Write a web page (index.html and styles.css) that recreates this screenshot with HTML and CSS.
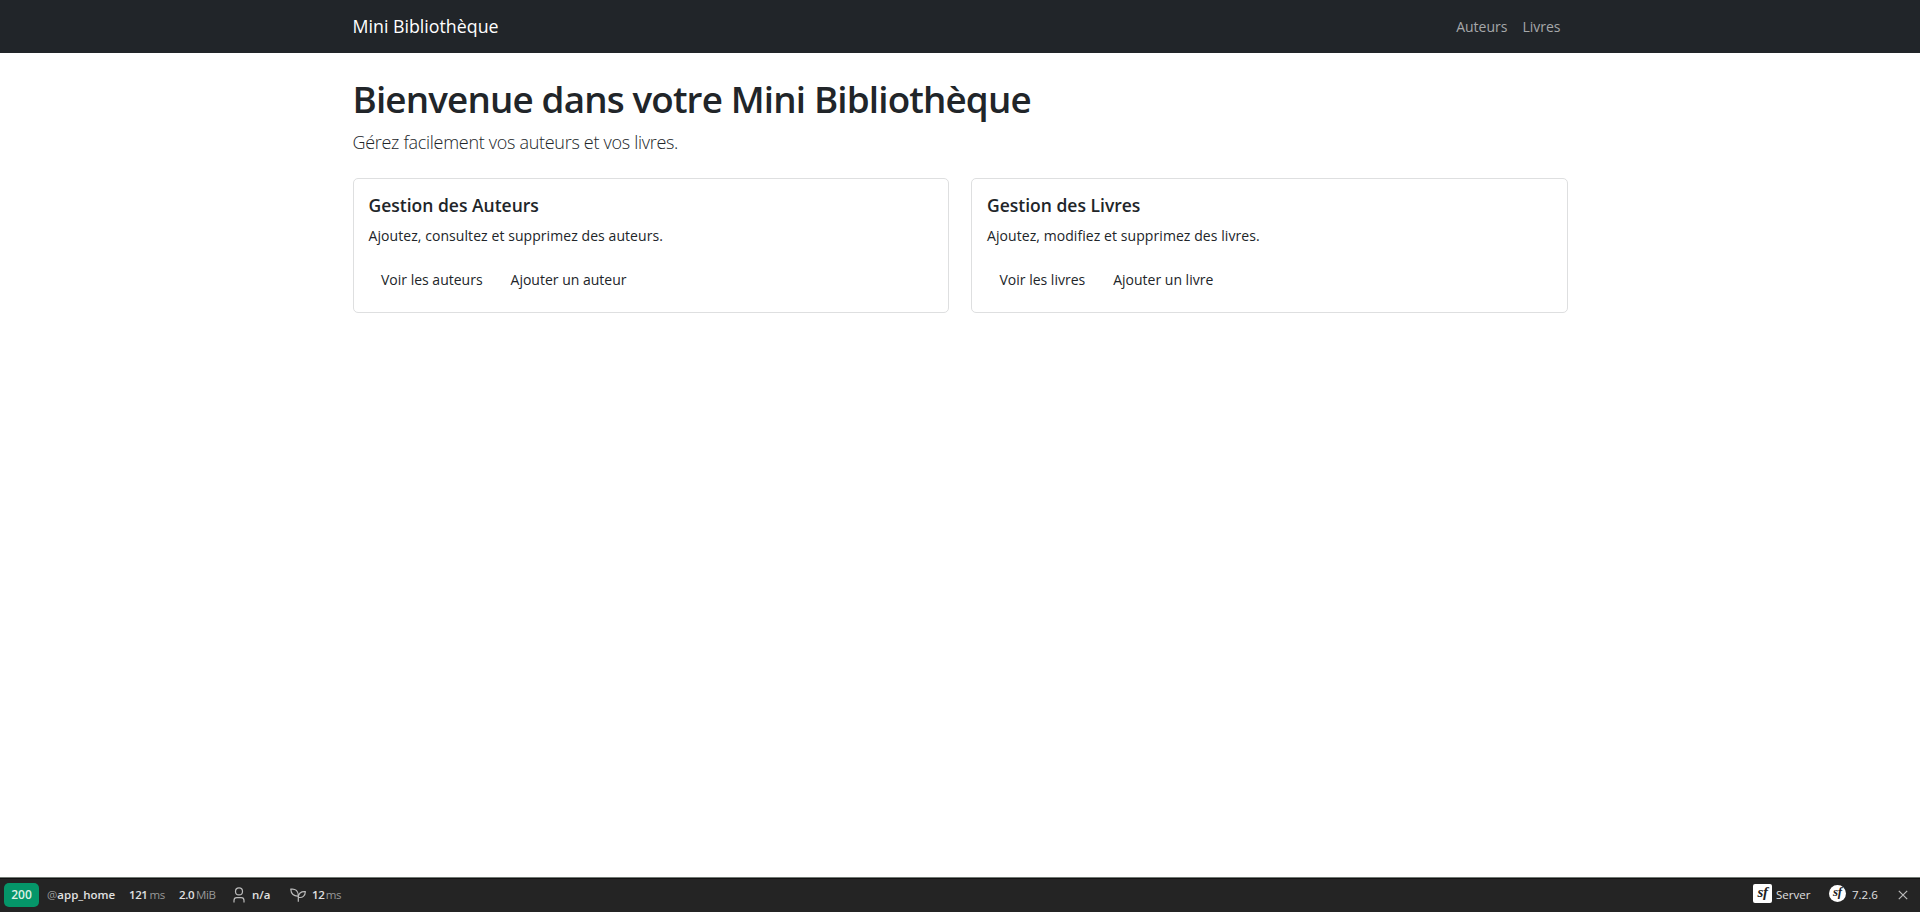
FILE: index.html
```html
<!DOCTYPE html>
<html lang="fr">
<head>
<meta charset="utf-8">
<title>Mini Bibliothèque</title>
<link rel="stylesheet" href="styles.css">
</head>
<body>
<header class="navbar">
  <nav class="container navbar-inner">
    <a class="brand"><span>Mini Bibliothèque</span></a>
    <div class="nav-links"><a class="nav-authors">Auteurs</a><a class="nav-books">Livres</a></div>
  </nav>
</header>
<main class="container main">
  <h1 class="heading">Bienvenue dans votre Mini Bibliothèque</h1>
  <p class="lead">Gérez facilement vos auteurs et vos livres.</p>
  <div class="cards">
    <section class="card">
      <h5 class="card-title">Gestion des Auteurs</h5>
      <p class="card-text">Ajoutez, consultez et supprimez des auteurs.</p>
      <div class="actions"><a class="btn">Voir les auteurs</a><a class="btn">Ajouter un auteur</a></div>
    </section>
    <section class="card">
      <h5 class="card-title">Gestion des Livres</h5>
      <p class="card-text">Ajoutez, modifiez et supprimez des livres.</p>
      <div class="actions"><a class="btn">Voir les livres</a><a class="btn">Ajouter un livre</a></div>
    </section>
  </div>
</main>
<footer class="toolbar">
  <div class="status">200</div>
  <div class="block route"><span class="unit">@</span><b>app_home</b></div>
  <div class="block time"><b>121</b><span class="unit">ms</span></div>
  <div class="block memory"><b>2.0</b><span class="unit">MiB</span></div>
  <div class="block user">
    <svg class="user-icon" viewBox="0 0 12 16"><circle cx="6" cy="4.4" r="3.5"/><path d="M1 15.500v-2q0-2.800 2.800-2.800h4.400q2.800 0 2.800 2.800v2"/></svg>
    <b>n/a</b>
  </div>
  <div class="block twig">
    <svg class="twig-icon" viewBox="0 0 16 14"><path d="M.8 1.200C5.500.4 8.400 3 8.300 8 3.800 8.300 1 5.800.8 1.200zM8.400 9.300C8.200 5.500 10.800 3.400 15.300 3.700 15.300 7.800 12.500 10.200 8.400 9.300zM8.300 8v5.800"/></svg>
    <b>12</b><span class="unit">ms</span>
  </div>
  <div class="block server"><span class="logo logo-square">sf</span><span>Server</span></div>
  <div class="block version"><span class="logo logo-round">sf</span><span>7.2.6</span></div>
  <svg class="close" viewBox="0 0 10 10"><path d="M.8.800l8.400 8.400M9.200.800.800 9.200"/></svg>
</footer>
</body>
</html>
```
FILE: styles.css
```css
* { box-sizing: border-box; }
body {
  margin: 0;
  min-height: 912px;
  display: flex;
  flex-direction: column;
  background: #fff;
  color: #212529;
  font-family: "Open Sans", "Noto Sans", sans-serif;
  font-size: 14px;
  white-space: nowrap;
}
h1, h5, p { margin: 0; }
.container { width: 1215px; margin: 0 auto; }
.navbar { height: 53px; background: #212529; }
.navbar-inner { height: 53px; display: flex; align-items: center; justify-content: space-between; }
.brand { color: #fff; font-size: 17.800px; line-height: 26px; padding-bottom: 2px; }
.nav-links { display: flex; gap: 15px; padding-right: 7px; color: #a6a8a9; font-size: 14px; line-height: 24px; }
.main { flex: 1; padding-top: 23px; }
.heading { font-size: 36.800px; line-height: 46px; font-weight: 600; letter-spacing: -0.840px; }
.lead { margin-top: 6px; font-size: 18px; line-height: 28px; font-weight: 300; letter-spacing: -0.300px; }
.cards { display: grid; grid-template-columns: 1fr 1fr; gap: 22px; margin-top: 22px; }
.card { height: 135px; border: 1px solid #dedfe0; border-radius: 5px; padding: 14px 15px; }
.card-title { font-size: 17.500px; line-height: 24px; font-weight: 600; }
.card-text { margin-top: 7px; line-height: 24px; letter-spacing: 0.070px; }
.actions { display: flex; gap: 28px; margin-top: 20px; padding-left: 12.500px; line-height: 24px; }
.toolbar {
  height: 35px;
  display: flex;
  align-items: center;
  border-top: 1px solid #737a74;
  box-shadow: inset 0 1px #111;
  background: #242424;
  color: #e0e0e0;
  font-size: 11.500px;
}
.toolbar b { font-weight: 600; }
.unit { color: #999; }
.status {
  width: 35px; height: 24px; margin-left: 4px;
  border-radius: 5px; background: #059669;
  color: #dcf0e6; font-weight: 600; font-size: 12px; line-height: 24px; text-align: center;
}
.block { display: flex; align-items: center; height: 20px; margin-top: -2px; }
.route { margin-left: 8px; width: 82px; }
.time { width: 50px; gap: 2px; }
.time, .memory, .twig { letter-spacing: -0.400px; }
.memory { width: 54px; gap: 2px; }
.user { width: 57px; gap: 7px; }
.twig { gap: 6px; }
.twig .unit { margin-left: -4.500px; }
.toolbar svg { fill: none; stroke: #bbb; stroke-width: 1.200; }
.user .user-icon { width: 12px; height: 16px; margin-top: 2px; }
.twig-icon { width: 16px; height: 14px; margin-top: 1px; }
.server { margin-left: auto; width: 76px; gap: 4px; }
.version { width: 69px; gap: 6px; }
.logo {
  background: #fff; color: #222; text-align: center;
  font-family: "Liberation Serif", serif; font-style: italic; font-weight: 700; letter-spacing: -0.300px;
}
.logo-square { width: 19px; height: 19px; margin-top: -1px; border-radius: 2px; font-size: 15px; line-height: 16px; }
.logo-round { width: 17px; height: 17px; margin-top: -1px; border-radius: 50%; font-size: 13px; line-height: 14px; }
.close { width: 10px; height: 10px; margin-right: 12px; }
```
